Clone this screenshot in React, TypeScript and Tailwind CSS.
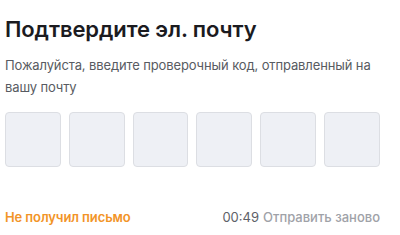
import React from 'react';

const App: React.FC = () => {
  const cells = [0, 1, 2, 3, 4, 5];

  return (
    <div className="w-[400px] h-[235px] bg-white overflow-hidden" style={{ fontFamily: 'Inter, "Noto Sans", sans-serif' }}>
      <div className="w-[380px] pl-[5px] pt-[14px]">
        <h1 className="text-[22px] leading-[30px] font-semibold text-[#1b1b1f] tracking-[-0.1px]">
          Подтвердите эл. почту
        </h1>
        <p className="mt-[10px] text-[13px] leading-[22px] text-[#585b62] tracking-[-0.12px]">
          Пожалуйста, введите проверочный код, отправленный на вашу почту
        </p>

        <div className="mt-[14px] flex gap-[8px]">
          {cells.map(i => (
            <div
              key={i}
              className="w-[56px] h-[55px] rounded-[4px] bg-[#eef0f5] border border-[#dcdee3]"
            />
          ))}
        </div>

        <div className="mt-[41px] flex items-center justify-between text-[13px] leading-[18px]">
          <button className="font-semibold text-[#f29427] tracking-[-0.1px]">Не получил письмо</button>
          <div className="flex items-center gap-[4px]">
            <span className="text-[#5e6168]">00:49</span>
            <span className="font-medium text-[#9fa2a8]">Отправить заново</span>
          </div>
        </div>
      </div>
    </div>
  );
};

export default App;
